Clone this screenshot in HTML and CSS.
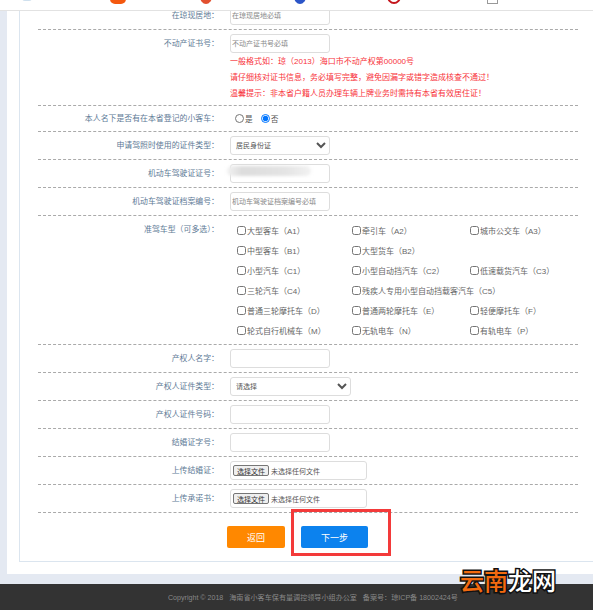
FILE: index.html
```html
<!DOCTYPE html>
<html lang="zh-CN">
<head>
<meta charset="utf-8">
<title>小客车申请</title>
<link rel="stylesheet" href="styles.css">
</head>
<body>
<div class="page">
  <nav class="bookmarks">
    <span class="mark mark-a"><i class="ico ico-pale"></i><b>网站导航首页大全</b></span>
    <span class="mark mark-b"><i class="ico ico-orange"></i><b>淘宝</b></span>
    <span class="mark mark-c"><i class="ico ico-red"></i><b>海南省政务服务</b></span>
    <span class="mark mark-d"><i class="ico ico-blue"></i><b>百度一下你就知道</b></span>
    <span class="mark mark-e"><i class="ico ico-ring"></i><b>中国银行网银_登</b></span>
    <span class="mark mark-f"><i class="ico ico-doc"></i><b>工作文档资料</b></span>
  </nav>
  <main class="viewport">
    <div class="panel">
      <div class="box">
        <form class="form">
          <div class="row">
            <label class="label">在琼现居地：</label>
            <div class="field"><input class="text" placeholder="在琼现居地必填"></div>
          </div>
          <div class="row row-tall">
            <label class="label">不动产证书号：</label>
            <div class="field">
              <input class="text" placeholder="不动产证书号必填">
              <p class="hint">一般格式如：琼（2013）海口市不动产权第00000号</p>
              <p class="hint">请仔细核对证书信息，务必填写完整，避免因漏字或错字造成核查不通过！</p>
              <p class="hint">温馨提示：非本省户籍人员办理车辆上牌业务时需持有本省有效居住证！</p>
            </div>
          </div>
          <div class="row row-radio">
            <label class="label">本人名下是否有在本省登记的小客车：</label>
            <div class="radios">
              <label class="radio"><input type="radio" name="own">是</label>
              <label class="radio"><input type="radio" name="own" checked>否</label>
            </div>
          </div>
          <div class="row">
            <label class="label">申请驾照时使用的证件类型：</label>
            <div class="field"><select class="select"><option>居民身份证</option></select></div>
          </div>
          <div class="row">
            <label class="label">机动车驾驶证证号：</label>
            <div class="field redacted"><input class="text"></div>
          </div>
          <div class="row">
            <label class="label">机动车驾驶证档案编号：</label>
            <div class="field"><input class="text" placeholder="机动车驾驶证档案编号必填"></div>
          </div>
          <div class="row">
            <label class="label">准驾车型（可多选）：</label>
            <div class="licences">
              <label class="check"><input type="checkbox">大型客车（A1）</label>
              <label class="check"><input type="checkbox">牵引车（A2）</label>
              <label class="check"><input type="checkbox">城市公交车（A3）</label>
              <label class="check"><input type="checkbox">中型客车（B1）</label>
              <label class="check wide"><input type="checkbox">大型货车（B2）</label>
              <label class="check"><input type="checkbox">小型汽车（C1）</label>
              <label class="check"><input type="checkbox">小型自动挡汽车（C2）</label>
              <label class="check"><input type="checkbox">低速载货汽车（C3）</label>
              <label class="check"><input type="checkbox">三轮汽车（C4）</label>
              <label class="check wide"><input type="checkbox">残疾人专用小型自动挡载客汽车（C5）</label>
              <label class="check"><input type="checkbox">普通三轮摩托车（D）</label>
              <label class="check"><input type="checkbox">普通两轮摩托车（E）</label>
              <label class="check"><input type="checkbox">轻便摩托车（F）</label>
              <label class="check"><input type="checkbox">轮式自行机械车（M）</label>
              <label class="check"><input type="checkbox">无轨电车（N）</label>
              <label class="check"><input type="checkbox">有轨电车（P）</label>
            </div>
          </div>
          <div class="row">
            <label class="label">产权人名字：</label>
            <div class="field"><input class="text"></div>
          </div>
          <div class="row">
            <label class="label">产权人证件类型：</label>
            <div class="field"><select class="select select-wide"><option>请选择</option></select></div>
          </div>
          <div class="row">
            <label class="label">产权人证件号码：</label>
            <div class="field"><input class="text"></div>
          </div>
          <div class="row">
            <label class="label">结婚证字号：</label>
            <div class="field"><input class="text"></div>
          </div>
          <div class="row">
            <label class="label">上传结婚证：</label>
            <div class="field"><div class="file"><button type="button" class="file-btn">选择文件</button><span>未选择任何文件</span></div></div>
          </div>
          <div class="row">
            <label class="label">上传承诺书：</label>
            <div class="field"><div class="file"><button type="button" class="file-btn">选择文件</button><span>未选择任何文件</span></div></div>
          </div>
          <div class="actions">
            <button type="button" class="btn btn-back">返回</button>
            <button type="button" class="btn btn-next">下一步</button>
            <span class="callout"></span>
          </div>
        </form>
      </div>
    </div>
  </main>
  <footer class="footer">Copyright © 2018&nbsp;&nbsp;&nbsp;海南省小客车保有量调控领导小组办公室 &nbsp;&nbsp;备案号：琼ICP备 18002424号</footer>
  <div class="stamp"><span class="stamp-hot">云南</span>龙网</div>
</div>
</body>
</html>
```
FILE: styles.css
```css
* { box-sizing: border-box; }
html, body { margin: 0; padding: 0; }
body {
  font-family: "Liberation Sans", "Noto Sans CJK SC", sans-serif;
  background: #e4e9f2;
  overflow: hidden;
}
.page {
  position: relative;
  width: 593px;
  height: 610px;
  display: flex;
  flex-direction: column;
  overflow: hidden;
}
.bookmarks {
  flex: none;
  height: 11px;
  background: #fff;
  border-bottom: 1px solid #e2e2e2;
  display: flex;
  overflow: hidden;
  align-items: flex-start;
}
.mark {
  display: flex;
  align-items: flex-start;
  flex: none;
  margin-top: -11px;
}
.mark b {
  font-weight: 400;
  font-size: 9px;
  line-height: 13px;
  color: #555;
  margin-left: 6px;
  white-space: nowrap;
}
.mark-a { width: 110px; padding-left: 22px; }
.mark-b { width: 90px; }
.mark-c { width: 94px; }
.mark-d { width: 93px; }
.mark-e { width: 100px; }
.mark-f { width: 90px; }
.ico { display: block; flex: none; width: 13px; height: 15px; border-radius: 3px; }
.ico-pale { background: #cfe0ee; width: 10px; height: 12px; }
.ico-orange { background: #f4580f; width: 16px; border-radius: 5px; }
.ico-red { background: #e2502f; border-radius: 50%; width: 12px; }
.ico-blue { background: #2b55c8; border-radius: 50%; width: 12px; }
.ico-ring { background: #fff; border: 2px solid #c4151c; border-radius: 50%; width: 14px; height: 15px; }
.ico-doc { background: #fff; border: 1px solid #999; border-radius: 0; width: 11px; }

.viewport {
  flex: none;
  height: 573px;
  overflow: hidden;
  padding-left: 7px;
}
.panel {
  margin-top: -9px;
  height: 572px;
  background: #fff;
  padding-left: 12px;
  padding-bottom: 12px;
}
.box {
  height: 100%;
  border-left: 1px solid #dbe5ef;
  border-bottom: 1px solid #dbe5ef;
  padding-left: 18px;
}
.form { width: 540px; }
.row {
  display: flex;
  align-items: flex-start;
  border-bottom: 1px dashed #aaa;
  padding: 4px 0;
}
.row-tall { padding-bottom: 3px; }
.row-tall .hint:first-of-type { margin-top: 1px; }
.row-radio { padding: 0; height: 26px; align-items: center; }
.label {
  flex: none;
  width: 181px;
  height: 19px;
  text-align: right;
  font-size: 7.9px;
  line-height: 20px;
  color: #5e7a96;
  white-space: nowrap;
  margin-right: 11px;
}
.row-radio .label { height: 26px; line-height: 26px; }
.field { position: relative; }
.text {
  display: block;
  width: 100px;
  height: 19px;
  border: 1px solid #ddd;
  border-radius: 3px;
  background: #fff;
  padding: 0 1px;
  font: 7px "Liberation Sans", "Noto Sans CJK SC", sans-serif;
  color: #555;
}
.text::placeholder { color: #888; opacity: 1; }
.hint {
  margin: 0;
  font-size: 8px;
  line-height: 16px;
  color: #f8323a;
  white-space: nowrap;
}
.radios { display: flex; align-items: center; padding-left: 5px; }
.radio {
  display: flex;
  align-items: center;
  font-size: 7.7px;
  color: #555;
  margin-right: 8px;
}
.radio input { width: 9px; height: 9px; margin: 0 1px 0 0; }
.select {
  display: block;
  width: 100px;
  height: 19px;
  border: 1px solid #ddd;
  border-radius: 3px;
  background-color: #fff;
  padding: 0 0 0 1px;
  font: 7px "Liberation Sans", "Noto Sans CJK SC", sans-serif;
  color: #555;
}
.select-wide { width: 121px; }
.redacted::after {
  content: "";
  position: absolute;
  left: -3px;
  top: 2px;
  width: 84px;
  height: 10px;
  border-radius: 5px;
  background: linear-gradient(90deg, #f2f2f2 0, #dcdcdc 18%, #e4e4e4 70%, #f2f2f2 100%);
  filter: blur(1.5px);
}
.licences {
  display: grid;
  grid-template-columns: 115px 118px 100px;
  grid-auto-rows: 20px;
  padding-left: 7px;
}
.check {
  display: flex;
  align-items: center;
  font-size: 8px;
  color: #666;
  white-space: nowrap;
}
.check input { width: 9px; height: 9px; margin: 0 1px 0 0; flex: none; }
.wide { grid-column: span 2; }
.file {
  display: flex;
  align-items: center;
  width: 137px;
  height: 19px;
  border: 1px solid #ddd;
  border-radius: 3px;
  padding-left: 2px;
  font-size: 7px;
  color: #555;
}
.file-btn {
  width: 36px;
  height: 11px;
  padding: 0;
  margin-right: 2px;
  border: 1px solid #767676;
  border-radius: 2px;
  background: #efefef;
  font: 7px "Liberation Sans", "Noto Sans CJK SC", sans-serif;
  color: #333;
}
.actions {
  position: relative;
  display: flex;
  gap: 16px;
  padding: 13px 0 0 189px;
}
.btn {
  height: 22px;
  border: 0;
  border-radius: 2px;
  padding: 0;
  color: #fff;
  font: 9px "Liberation Sans", "Noto Sans CJK SC", sans-serif;
}
.btn-back { width: 58px; background: #ff8800; }
.btn-next { width: 67px; background: #0c82ee; }
.callout {
  position: absolute;
  left: 253px;
  top: -4px;
  width: 100px;
  height: 47px;
  border: 3px solid #f33a3a;
}
.footer {
  flex: none;
  height: 26px;
  background: #333;
  color: #888;
  font-size: 7.1px;
  line-height: 28px;
  padding-left: 168px;
  white-space: nowrap;
}
.stamp {
  position: absolute;
  left: 460px;
  top: 565px;
  font: 500 24px/30px "Noto Sans CJK SC", sans-serif;
  color: #fff;
  -webkit-text-stroke: 3px #111;
  paint-order: stroke fill;
  white-space: nowrap;
}
.stamp-hot { color: #f26a0f; }
```
